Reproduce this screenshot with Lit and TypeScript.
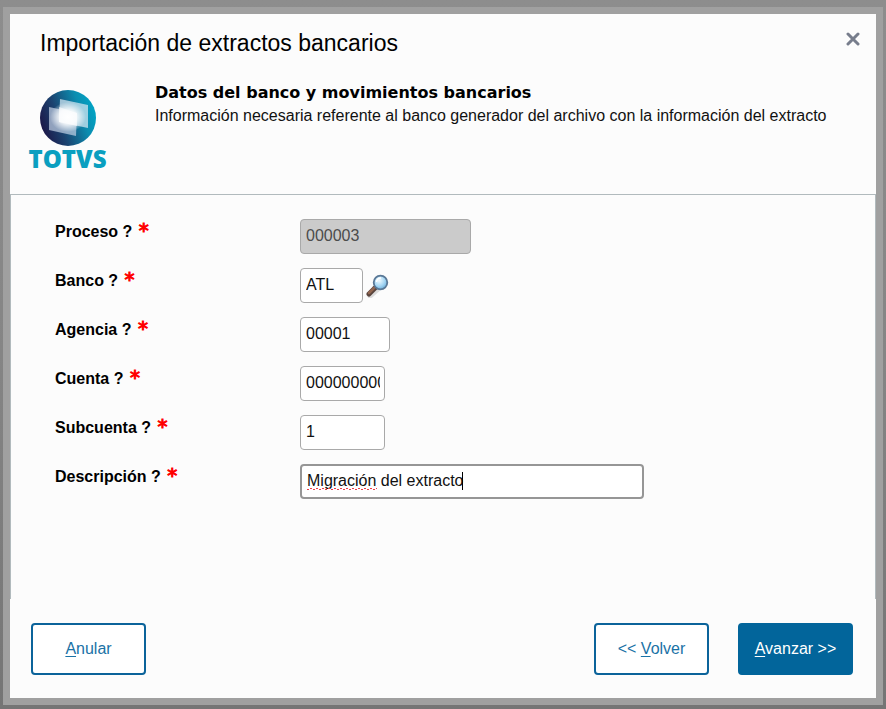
import { LitElement, html, css, svg, nothing } from "lit";
import { customElement } from "lit/decorators.js";

interface Field {
  id: string;
  label: string;
  value: string;
  size: string;
  disabled?: boolean;
  lookup?: boolean;
  editing?: boolean;
}

const FIELDS: Field[] = [
  { id: "proceso", label: "Proceso ?", value: "000003", size: "w-process", disabled: true },
  { id: "banco", label: "Banco ?", value: "ATL", size: "w-bank", lookup: true },
  { id: "agencia", label: "Agencia ?", value: "00001", size: "w-agency" },
  { id: "cuenta", label: "Cuenta ?", value: "0000000001", size: "w-account" },
  { id: "subcuenta", label: "Subcuenta ?", value: "1", size: "w-account" },
  { id: "descripcion", label: "Descripción ?", value: "Migración del extracto", size: "w-description", editing: true },
];

const globe = svg`
  <defs>
    <linearGradient id="ball" x1="0" y1="0.7" x2="1" y2="0.35">
      <stop offset="0" stop-color="#1d1445"></stop>
      <stop offset="0.35" stop-color="#1b4370"></stop>
      <stop offset="0.75" stop-color="#0b8db0"></stop>
      <stop offset="1" stop-color="#00a5c6"></stop>
    </linearGradient>
    <radialGradient id="glow">
      <stop offset="0" stop-color="#fff"></stop>
      <stop offset="0.5" stop-color="#fff" stop-opacity="0.8"></stop>
      <stop offset="1" stop-color="#fff" stop-opacity="0"></stop>
    </radialGradient>
  </defs>
  <circle cx="28" cy="28" r="28" fill="url(#ball)"></circle>
  <path d="M20 9 L48 15 L48 38 L19 32Z" fill="#cfe4f0" fill-opacity="0.75"></path>
  <path d="M9 17 L37 23 L36 46 L9 40Z" fill="#c3d2e6" fill-opacity="0.7"></path>
  <path d="M19 17 L37 23 L37 36 L19 32Z" fill="#fff" fill-opacity="0.6"></path>
  <ellipse cx="28" cy="27" rx="18" ry="15" fill="url(#glow)"></ellipse>`;

@customElement("app-root")
export class AppRoot extends LitElement {
  static styles = css`
    :host {
      display: block;
      font-family: "Liberation Sans", Arial, sans-serif;
      font-size: 16px;
      line-height: 20px;
      color: #111;
    }
    * { box-sizing: border-box; }
    .backdrop {
      min-height: 100vh;
      display: flex;
      padding: 7px 3px 4px;
      background: linear-gradient(#8d8d8d, #858585 50%, #757575);
    }
    .dialog {
      flex: 1;
      display: flex;
      flex-direction: column;
      border: 7px solid #a0a0a0;
      background: #fcfcfc;
    }
    .titlebar {
      display: flex;
      justify-content: space-between;
      align-items: flex-start;
      padding: 14px 14px 0 30px;
    }
    h1 {
      margin: 0;
      font-size: 23px;
      line-height: 30px;
      font-weight: 400;
      color: #000;
    }
    .close {
      display: flex;
      border: 0;
      padding: 4px 2px;
      background: none;
    }
    .intro {
      display: flex;
      min-height: 136px;
      gap: 49px;
      padding: 24px 20px 0 19px;
    }
    .logo {
      display: flex;
      flex-direction: column;
      align-items: center;
      width: 77px;
      padding-top: 8px;
    }
    .wordmark {
      font-family: "Open Sans", sans-serif;
      font-weight: 800;
      font-size: 24px;
      line-height: 26px;
      color: #0a9fc0;
    }
    h2 {
      margin: 0;
      font-family: "DejaVu Sans", Verdana, sans-serif;
      font-size: 16px;
      line-height: 22px;
      font-weight: 700;
      color: #000;
    }
    p { margin: 2px 0 0; }
    .body {
      flex: 1;
      display: flex;
      flex-direction: column;
      gap: 14px;
      padding: 24px 44px;
      border: 1px solid #b1babd;
      border-bottom: 0;
    }
    .row {
      display: grid;
      grid-template-columns: 245px 1fr;
      min-height: 35px;
    }
    label {
      padding-top: 1px;
      font-weight: 700;
      color: #000;
    }
    .required {
      margin-left: 2px;
      font-family: "DejaVu Sans", sans-serif;
      font-size: 20px;
      line-height: 20px;
      font-weight: 400;
      color: #f00;
      -webkit-text-stroke: 1px #f00;
    }
    .control {
      display: flex;
      align-items: center;
      gap: 3px;
    }
    .entry { position: relative; display: flex; }
    input {
      width: 100%;
      height: 35px;
      padding: 0 4px 2px 5px;
      border: 1px solid #a9a9a9;
      border-radius: 4px;
      background: #fff;
      font: inherit;
      color: #111;
      outline: 0;
    }
    input:disabled { background: #cbcbcb; color: #4c4c4c; }
    .w-process { width: 171px; }
    .w-bank { width: 63px; }
    .w-agency { width: 90px; }
    .w-account { width: 85px; }
    .w-description { width: 344px; }
    .editing input { border: 2px solid #969696; }
    .squiggle { position: absolute; left: 7px; top: 23px; }
    .caret {
      position: absolute;
      left: 162px;
      top: 8px;
      width: 1px;
      height: 18px;
      background: #000;
    }
    .lookup { display: flex; border: 0; padding: 0; background: none; }
    .footer {
      display: flex;
      gap: 29px;
      padding: 24px 23px 23px 21px;
    }
    .btn {
      width: 115px;
      height: 52px;
      border: 2px solid #0b639a;
      border-radius: 4px;
      padding: 0;
      background: #fff;
      color: #1a72a6;
      font: inherit;
    }
    .cancel { margin-right: auto; }
    .primary { background: #02659b; border-color: #02659b; color: #fff; }
    u { text-underline-offset: 2px; }
  `;

  private renderField(f: Field) {
    return html`
      <div class="row">
        <label for=${f.id}>${f.label} <span class="required">*</span></label>
        <div class="control">
          <div class="entry ${f.size} ${f.editing ? "editing" : ""}">
            <input id=${f.id} type="text" .value=${f.value} ?disabled=${f.disabled ?? false} required />
            ${f.editing
              ? html`<svg class="squiggle" width="70" height="3" viewBox="0 0 70 3" aria-hidden="true">
                    <path d="M0 2.5H70" stroke="#ee3c48" stroke-width="1" stroke-dasharray="2 4"></path>
                    <path d="M3 1.5H70" stroke="#ee3c48" stroke-width="1" stroke-dasharray="2 4"></path>
                  </svg>
                  <span class="caret"></span>`
              : nothing}
          </div>
          ${f.lookup
            ? html`<button class="lookup" type="button" aria-label="Buscar banco">
                <svg width="24" height="24" viewBox="0 0 24 24">
                  <defs>
                    <radialGradient id="lens" cx="0.4" cy="0.35" r="0.7">
                      <stop offset="0" stop-color="#f2fbff"></stop>
                      <stop offset="0.6" stop-color="#a3d5f3"></stop>
                      <stop offset="1" stop-color="#68abd9"></stop>
                    </radialGradient>
                  </defs>
                  <path d="M4 22 L12 15" stroke="#bbb" stroke-opacity="0.5" stroke-width="5" stroke-linecap="round"></path>
                  <path d="M3 20 L9 14" stroke="#59443d" stroke-width="5" stroke-linecap="round"></path>
                  <path d="M3 19 L8 14" stroke="#926650" stroke-width="2.5" stroke-linecap="round"></path>
                  <circle cx="14.5" cy="8.5" r="6.8" fill="url(#lens)" stroke="#5a7896" stroke-width="1.8"></circle>
                  <path d="M10.5 8 A4.5 4.5 0 0 1 15 4" fill="none" stroke="#fff" stroke-width="1.5"></path>
                </svg>
              </button>`
            : nothing}
        </div>
      </div>`;
  }

  render() {
    return html`
      <div class="backdrop">
        <section class="dialog" role="dialog" aria-labelledby="title">
          <header class="titlebar">
            <h1 id="title">Importación de extractos bancarios</h1>
            <button class="close" type="button" aria-label="Cerrar">
              <svg width="14" height="14" viewBox="0 0 14 14">
                <path d="M2 2 L12 12 M12 2 L2 12" stroke="#777d8c" stroke-width="3" stroke-linecap="round"></path>
              </svg>
            </button>
          </header>
          <div class="intro">
            <div class="logo">
              <svg width="56" height="56" viewBox="0 0 56 56" aria-hidden="true">${globe}</svg>
              <span class="wordmark">TOTVS</span>
            </div>
            <div>
              <h2>Datos del banco y movimientos bancarios</h2>
              <p>Información necesaria referente al banco generador del archivo con la información del extracto</p>
            </div>
          </div>
          <form class="body">${FIELDS.map((f) => this.renderField(f))}</form>
          <footer class="footer">
            <button class="btn cancel" type="button"><u>A</u>nular</button>
            <button class="btn" type="button">&lt;&lt; <u>V</u>olver</button>
            <button class="btn primary" type="button"><u>A</u>vanzar &gt;&gt;</button>
          </footer>
        </section>
      </div>`;
  }
}
